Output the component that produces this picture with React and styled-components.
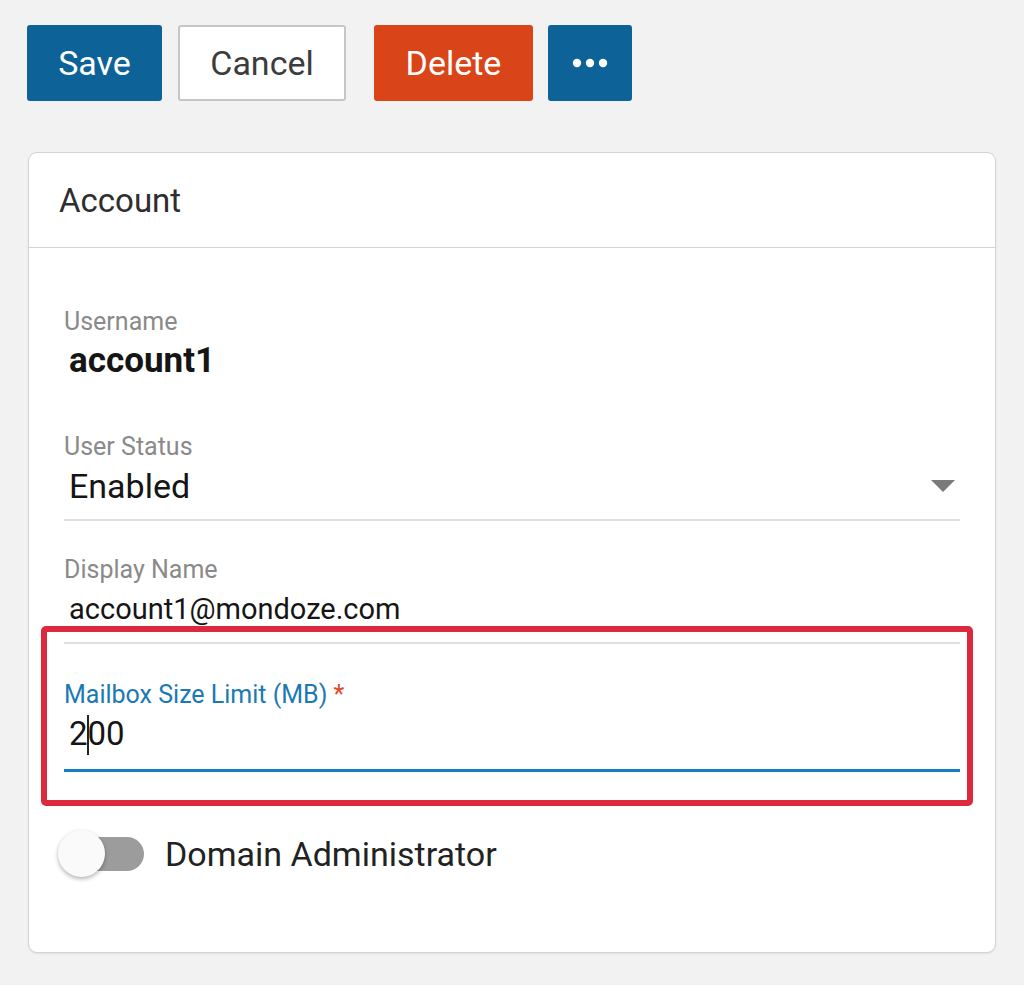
import React from "react";
import styled, { createGlobalStyle } from "styled-components";

const GlobalStyle = createGlobalStyle`
  html, body {
    margin: 0;
    padding: 0;
    background: #f2f2f2;
    font-family: Roboto, "Liberation Sans", Arial, sans-serif;
  }
`;

const Page = styled.div`
  width: 1024px;
  height: 985px;
  box-sizing: border-box;
  padding: 25px 28px 0 27px;
  background: #f2f2f2;
`;

const Toolbar = styled.div`
  display: flex;
  align-items: center;
  height: 76px;
`;

const variants = {
  primary: { bg: "#0d6297", color: "#ffffff", border: "#0d6297" },
  danger: { bg: "#d94519", color: "#ffffff", border: "#d94519" },
  secondary: { bg: "#ffffff", color: "#3c3c3c", border: "#c6c6c6" },
};

const Button = styled.button`
  box-sizing: border-box;
  height: 76px;
  width: ${(p) => p.$width}px;
  margin-left: ${(p) => p.$gap || 0}px;
  display: inline-flex;
  align-items: center;
  justify-content: center;
  border-radius: 3px;
  border: 2px solid ${(p) => variants[p.$variant].border};
  background: ${(p) => variants[p.$variant].bg};
  color: ${(p) => variants[p.$variant].color};
  font-family: Roboto, "Liberation Sans", Arial, sans-serif;
  font-size: 34px;
  padding: 0;
  cursor: pointer;
`;

const Card = styled.div`
  margin-top: 51px;
  margin-left: 1px;
  width: 968px;
  height: 801px;
  box-sizing: border-box;
  background: #ffffff;
  border: 1.5px solid #d3d3d3;
  border-radius: 9px;
  box-shadow: 0 1px 2px rgba(0, 0, 0, 0.08);
  display: flex;
  flex-direction: column;
`;

const CardHeader = styled.div`
  height: 95px;
  box-sizing: border-box;
  display: flex;
  align-items: center;
  padding-left: 30px;
  border-bottom: 1.5px solid #d3d3d3;
  font-size: 33px;
  color: #2e2e2e;
`;

const CardBody = styled.div`
  padding: 60px 35px 0 35px;
  display: flex;
  flex-direction: column;
`;

const Field = styled.div`
  position: relative;
  display: flex;
  flex-direction: column;
  margin-bottom: ${(p) => p.$spacing ?? 36}px;
`;

const Label = styled.label`
  font-size: 25px;
  line-height: 28px;
  color: ${(p) => (p.$active ? "#1b79b4" : "#8a8a8a")};
`;

const Required = styled.span`
  color: #e2462b;
  margin-left: 6px;
`;

const Value = styled.div`
  display: flex;
  align-items: center;
  margin-top: 2px;
  padding: 0 0 ${(p) => (p.$active ? 12 : 10)}px 5px;
  line-height: 46px;
  height: 46px;
  font-size: ${(p) => p.$size || 30}px;
  font-weight: ${(p) => (p.$bold ? 700 : 400)};
  color: #151515;
  border-bottom: ${(p) =>
    p.$active
      ? "3px solid #1480c2"
      : p.$plain
      ? "2px solid transparent"
      : "2px solid #dedede"};
`;

const ValueText = styled.span`
  flex: 1;
`;

const Caret = styled.span`
  display: inline-block;
  width: 2px;
  height: 40px;
  margin: 0 -1px 0 -1px;
  vertical-align: -10px;
  background: #222;
`;

const DropArrow = styled.span`
  width: 0;
  height: 0;
  margin-right: 5px;
  border-left: 12px solid transparent;
  border-right: 12px solid transparent;
  border-top: 12px solid #7a7a7a;
`;

const Highlight = styled(Field)`
  &::after {
    content: "";
    position: absolute;
    top: -55px;
    left: -23px;
    right: -13px;
    bottom: -34px;
    border: 6px solid #dc2a3c;
    border-radius: 5px;
    pointer-events: none;
  }
`;

const ToggleRow = styled.div`
  display: flex;
  align-items: center;
  margin-top: 58px;
  margin-left: -6px;
`;

const Switch = styled.div`
  position: relative;
  width: 86px;
  height: 48px;
  display: flex;
  align-items: center;
  justify-content: flex-end;
`;

const Track = styled.div`
  width: 64px;
  height: 34px;
  border-radius: 17px;
  background: #9c9c9c;
`;

const Knob = styled.div`
  position: absolute;
  left: 0;
  top: 0;
  width: 47px;
  height: 47px;
  border-radius: 50%;
  background: #fafafa;
  box-shadow: 0 2px 4px rgba(0, 0, 0, 0.3);
`;

const ToggleLabel = styled.span`
  margin-left: 21px;
  font-size: 34px;
  color: #222;
`;

const Dots = () => (
  <svg width="36" height="10" viewBox="0 0 36 10">
    <circle cx="5" cy="5" r="4.2" fill="#fff" />
    <circle cx="18" cy="5" r="4.2" fill="#fff" />
    <circle cx="31" cy="5" r="4.2" fill="#fff" />
  </svg>
);

export default function App() {
  return (
    <Page>
      <GlobalStyle />
      <Toolbar>
        <Button $variant="primary" $width={135}>
          Save
        </Button>
        <Button $variant="secondary" $width={168} $gap={16}>
          Cancel
        </Button>
        <Button $variant="danger" $width={159} $gap={28}>
          Delete
        </Button>
        <Button $variant="primary" $width={84} $gap={15}>
          <Dots />
        </Button>
      </Toolbar>

      <Card>
        <CardHeader>Account</CardHeader>
        <CardBody>
          <Field $spacing={37}>
            <Label>Username</Label>
            <Value $bold $plain $size={35}>
              account1
            </Value>
          </Field>

          <Field $spacing={35}>
            <Label>User Status</Label>
            <Value $size={34}>
              <ValueText>Enabled</ValueText>
              <DropArrow />
            </Value>
          </Field>

          <Field $spacing={37}>
            <Label>Display Name</Label>
            <Value $size={29}>account1@mondoze.com</Value>
          </Field>

          <Highlight $spacing={0}>
            <Label $active>
              Mailbox Size Limit (MB)
              <Required>*</Required>
            </Label>
            <Value $active $size={33}>
              <span>
                2<Caret />
                00
              </span>
            </Value>
          </Highlight>

          <ToggleRow>
            <Switch>
              <Track />
              <Knob />
            </Switch>
            <ToggleLabel>Domain Administrator</ToggleLabel>
          </ToggleRow>
        </CardBody>
      </Card>
    </Page>
  );
}
